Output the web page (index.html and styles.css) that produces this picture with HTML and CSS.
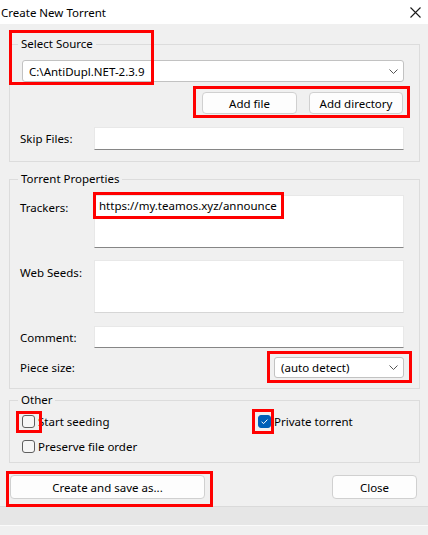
FILE: index.html
```html
<!DOCTYPE html>
<html lang="en">
    <head>
        <meta charset="UTF-8">
        <meta name="viewport" content="width=device-width, initial-scale=1.0">
        <title>Create New Torrent</title>
        <link rel="stylesheet" href="styles.css">
    </head>
    <body>

        <!-- Barra de titulo -->
        <div class="titlebar">
            <span class="title">Create New Torrent</span>
            <svg class="close" width="11" height="11" viewBox="0 0 11 11">
                <path d="M0.5 0.5 L10.5 10.5 M10.5 0.5 L0.5 10.5" stroke="#1a1a1a" stroke-width="1.1" fill="none"/>
            </svg>
        </div>

        <div class="content">
            <fieldset class="group group-source">
                <legend>Select Source</legend>
                <div class="combo combo-source">
                    <span>C:\AntiDupl.NET-2.3.9</span>
                    <svg class="chevron" width="9" height="5" viewBox="0 0 9 5"><path d="M0.5 0.5 L4.5 4.5 L8.5 0.5" stroke="#555" fill="none"/></svg>
                </div>
                <div class="add-row">
                    <div class="btn btn-file">Add file</div>
                    <div class="btn btn-dir">Add directory</div>
                </div>
                <div class="row skip-row">
                    <span class="label">Skip Files:</span>
                    <div class="field field-line"></div>
                </div>
            </fieldset>

            <fieldset class="group group-props">
                <legend>Torrent Properties</legend>
                <div class="row">
                    <span class="label label-top">Trackers:</span>
                    <div class="field field-area">https://my.teamos.xyz/announce</div>
                </div>
                <div class="row seeds-row">
                    <span class="label label-top">Web Seeds:</span>
                    <div class="field field-area field-plain"></div>
                </div>
                <div class="row comment-row">
                    <span class="label">Comment:</span>
                    <div class="field field-line field-comment"></div>
                </div>
                <div class="row piece-row">
                    <span class="label">Piece size:</span>
                    <div class="combo combo-piece">
                        <span>(auto detect)</span>
                        <svg class="chevron" width="9" height="5" viewBox="0 0 9 5"><path d="M0.5 0.5 L4.5 4.5 L8.5 0.5" stroke="#555" fill="none"/></svg>
                    </div>
                </div>
            </fieldset>

            <fieldset class="group group-other">
                <legend>Other</legend>
                <div class="checks">
                    <div class="check"><span class="box"></span>Start seeding</div>
                    <div class="check"><span class="box box-on"><svg width="13" height="13" viewBox="0 0 13 13"><path d="M3.6 6.8 L5.6 8.6 L9.4 4.6" stroke="#fff" stroke-width="1" fill="none"/></svg></span>Private torrent</div>
                    <div class="check"><span class="box"></span>Preserve file order</div>
                </div>
            </fieldset>

            <div class="actions">
                <div class="btn btn-create">Create and save as...</div>
                <div class="btn btn-close">Close</div>
            </div>
        </div>

        <div class="statusbar"></div>

        <!-- Marcacoes vermelhas por cima da janela -->
        <div class="mark mark-source"></div>
        <div class="mark mark-add"></div>
        <div class="mark mark-tracker"></div>
        <div class="mark mark-piece"></div>
        <div class="mark mark-seed"></div>
        <div class="mark mark-private"></div>
        <div class="mark mark-create"></div>
    </body>
</html>
```

FILE: styles.css
```css
/* Janela */
body {
    margin: 0;
    width: 428px;
    height: 535px;
    background: #f0f0f0;
    font-family: "Noto Sans", sans-serif;
    font-size: 11px;
    color: #000;
    position: relative;
    overflow: hidden;
}

.titlebar {
    height: 24px;
    background: #fff;
    display: flex;
    align-items: center;
    justify-content: space-between;
    padding: 0 7px 0 1px;
    font-size: 11.5px;
}

.close {
    margin-top: 1px;
}

.content {
    padding: 0 8px 0 9px;
}

/* Caixas de grupo */
.group {
    margin: 0;
    border: 1px solid #dcdcdc;
    padding: 9px 15px 10px 10px;
    min-width: 0;
}

.group legend {
    padding: 0 3px;
    margin-left: -2px;
    line-height: 14px;
    font-size: 11.5px;
}

.group-source {
    margin-top: 13px;
    padding-bottom: 11px;
}

.group-props {
    margin-top: 10px;
}

.group-other {
    margin-top: 4px;
    padding-top: 6px;
    padding-bottom: 8px;
}

/* Campos */
.row {
    display: flex;
    align-items: center;
}

.label {
    width: 74px;
    flex-shrink: 0;
    font-size: 11.5px;
}

.label-top {
    align-self: flex-start;
    margin-top: 5px;
}

.field {
    flex: 1;
    background: #fff;
    border: 1px solid #e8e8e8;
    border-bottom-color: #868686;
    box-sizing: border-box;
}

.field-line {
    height: 23px;
}

.field-comment {
    height: 22px;
}

.field-area {
    height: 53px;
    padding: 2px 4px;
    line-height: 16px;
    font-size: 11.5px;
}

.field-plain {
    border-bottom-color: #d6d6d6;
}

.combo {
    background: #fff;
    border: 1px solid #c2c2c2;
    border-radius: 3px;
    box-sizing: border-box;
    display: flex;
    align-items: center;
    justify-content: space-between;
    padding: 0 5px 0 6px;
    font-size: 11.5px;
}

.combo-source {
    height: 22px;
    margin-left: 2px;
}

.combo-piece {
    height: 21px;
    width: 130px;
    margin-left: auto;
}

.skip-row {
    margin-top: 13px;
}

.seeds-row {
    margin-top: 12px;
}

.comment-row {
    margin-top: 13px;
}

.piece-row {
    margin-top: 9px;
}

/* Botoes */
.btn {
    background: #fdfdfd;
    border: 1px solid #d0d0d0;
    border-radius: 4px;
    box-sizing: border-box;
    display: flex;
    align-items: center;
    justify-content: center;
    font-size: 11.5px;
}

.add-row {
    display: flex;
    justify-content: flex-end;
    gap: 12px;
    margin-top: 10px;
    margin-right: 1px;
}

.btn-file {
    width: 95px;
    height: 22px;
}

.btn-dir {
    width: 94px;
    height: 22px;
}

.actions {
    display: flex;
    justify-content: space-between;
    margin: 12px 3px 0 1px;
}

.btn-create {
    width: 195px;
    height: 24px;
}

.btn-close {
    width: 85px;
    height: 24px;
}

/* Caixas de selecao */
.checks {
    display: grid;
    grid-template-columns: 236px 1fr;
    row-gap: 9px;
}

.check {
    display: flex;
    align-items: center;
    height: 16px;
    font-size: 11.5px;
}

.box {
    width: 13px;
    height: 13px;
    box-sizing: border-box;
    border: 1px solid #5f5f5f;
    border-radius: 3px;
    margin: 0 3px 0 2px;
    background: #f6f6f6;
    display: flex;
}

.box-on {
    background: #005fb8;
    border-color: #005fb8;
}

.box-on svg {
    margin: -1px;
}

/* Barra de status */
.statusbar {
    margin-top: 7px;
    height: 20px;
    background: #e6e6e6;
    border-top: 1px solid #dadada;
    border-bottom: 1px solid #fafafa;
    box-sizing: border-box;
}

/* Marcacoes */
.mark {
    position: absolute;
    border: 3px solid #ff0000;
    box-sizing: border-box;
}

.mark-source { left: 9px; top: 30px; width: 145px; height: 55px; }
.mark-add { left: 193px; top: 86px; width: 217px; height: 32px; }
.mark-tracker { left: 93px; top: 192px; width: 191px; height: 27px; }
.mark-piece { left: 267px; top: 351px; width: 145px; height: 32px; }
.mark-seed { left: 16px; top: 411px; width: 26px; height: 22px; }
.mark-private { left: 252px; top: 409px; width: 22px; height: 25px; }
.mark-create { left: 6px; top: 471px; width: 207px; height: 36px; }
```
